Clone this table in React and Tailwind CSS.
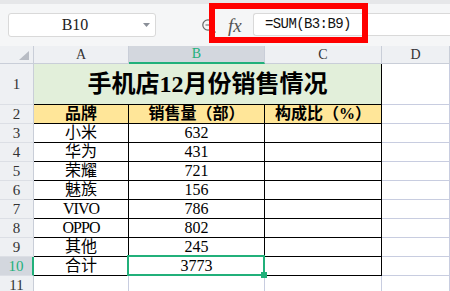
import React from "react";

const rows = [
  ["小米", "632"],
  ["华为", "431"],
  ["荣耀", "721"],
  ["魅族", "156"],
  ["VIVO", "786"],
  ["OPPO", "802"],
  ["其他", "245"],
  ["合计", "3773"],
];

function RowHead({ n, active }) {
  return (
    <div
      className={
        active
          ? "flex items-center justify-center border-b border-r-2 border-b-[#dcdfe5] border-r-[#21b07a] bg-[#d3d7de] text-[15px] leading-none text-[#21b07a]"
          : "flex items-center justify-center border-b border-r border-b-[#dcdfe5] border-r-[#c9ced8] bg-[#eef0f3] text-[15px] leading-none text-[#333]"
      }
    >
      {n}
    </div>
  );
}

function Toolbar() {
  return (
    <div className="flex h-[46px] items-start border-t-4 border-[#e6e7e9] bg-[#f5f6f7] pt-[9px]">
      <div className="ml-[8px] flex h-[24px] w-[148px] items-center rounded-[3px] border border-[#d9d9d9] bg-white">
        <span className="w-[132px] text-center text-[16px] leading-none text-[#222]">B10</span>
        <svg width="7" height="4" viewBox="0 0 7 4" className="ml-[2px]">
          <path d="M0 0h7L3.5 4z" fill="#8a8f98" />
        </svg>
      </div>
      <svg width="16" height="16" viewBox="0 0 16 16" className="ml-[45px] mt-[5px]">
        <circle cx="7" cy="7" r="5.2" fill="none" stroke="#666" strokeWidth="1.2" />
        <path d="M4.5 7h5M10.8 10.8l3.7 3.7" stroke="#666" strokeWidth="1.2" />
      </svg>
      <div className="ml-[11px] w-[16px] pt-[3px] text-[19px] italic leading-none text-[#555]">fx</div>
      <div className="ml-[9px] flex h-[23px] flex-1 items-center rounded-l-[3px] border-y border-l border-[#d9d9d9] bg-white pl-[11px] font-['Liberation_Mono',monospace] text-[14px] tracking-[-0.6px] text-[#111]">
        =SUM(B3:B9)
      </div>
    </div>
  );
}

function Sheet() {
  const head = "flex items-center justify-center border-b border-r border-[#c9ced8] bg-[#eef0f3] text-[14px] leading-none text-[#333]";
  const gray = "border-b border-r border-[#c8cde0]";
  const cell = "flex items-center justify-center border-b border-r border-black text-[16px] leading-[18px]";
  return (
    <div className="grid grid-cols-[34px_95px_136px_117px_68px] grid-rows-[18px_41px_repeat(10,19px)]">
      <div className="relative border-b border-r border-[#c9ced8] bg-[#eef0f3]">
        <svg width="10" height="9" viewBox="0 0 10 9" className="absolute bottom-[3px] right-[4px]">
          <path d="M10 0v9H0z" fill="#b8bcc4" />
        </svg>
      </div>
      <div className={head}>A</div>
      <div className="flex items-center justify-center border-b-2 border-r border-b-[#21b07a] border-r-[#c9ced8] bg-[#d3d7de] text-[14px] leading-none text-[#21b07a]">
        B
      </div>
      <div className={head}>C</div>
      <div className={head}>D</div>

      <RowHead n="1" />
      <div className="col-span-3 flex items-center justify-center border-b border-r border-black bg-[#e2efda] text-[24px] font-bold leading-none">
        手机店12月份销售情况
      </div>
      <div className={gray} />

      <RowHead n="2" />
      <div className={cell + " bg-[#ffe699] text-[15px] font-bold"}>品牌</div>
      <div className={cell + " bg-[#ffe699] text-[15px] font-bold"}>销售量（部）</div>
      <div className={cell + " bg-[#ffe699] text-[15px] font-bold"}>构成比（%）</div>
      <div className={gray} />

      {rows.map(([name, qty], i) => {
        const active = i === rows.length - 1;
        const latin = /^[A-Z]+$/.test(name);
        return (
          <React.Fragment key={name}>
            <RowHead n={i + 3} active={active} />
            <div className={cell + (latin ? " tracking-[-1px]" : "")}>{name}</div>
            <div className={cell + " relative"}>
              {qty}
              {active && (
                <div className="absolute -bottom-px -left-[2px] -right-px -top-[2px] z-10 border-2 border-[#21b07a]">
                  <div className="absolute -bottom-[4px] -right-[4px] h-[6px] w-[6px] bg-[#21b07a]" />
                </div>
              )}
            </div>
            <div className={cell} />
            <div className={gray} />
          </React.Fragment>
        );
      })}

      <RowHead n="11" />
      <div className={gray} />
      <div className={gray} />
      <div className={gray} />
      <div className={gray} />
    </div>
  );
}

export default function App() {
  return (
    <div className="relative h-[291px] w-[450px] overflow-hidden bg-white font-['Liberation_Serif','Noto_Sans_CJK_SC',serif] text-black">
      <Toolbar />
      <Sheet />
      <div className="absolute left-[209px] top-[3px] h-[40px] w-[159px] border-[6px] border-[#ff0000]" />
    </div>
  );
}
